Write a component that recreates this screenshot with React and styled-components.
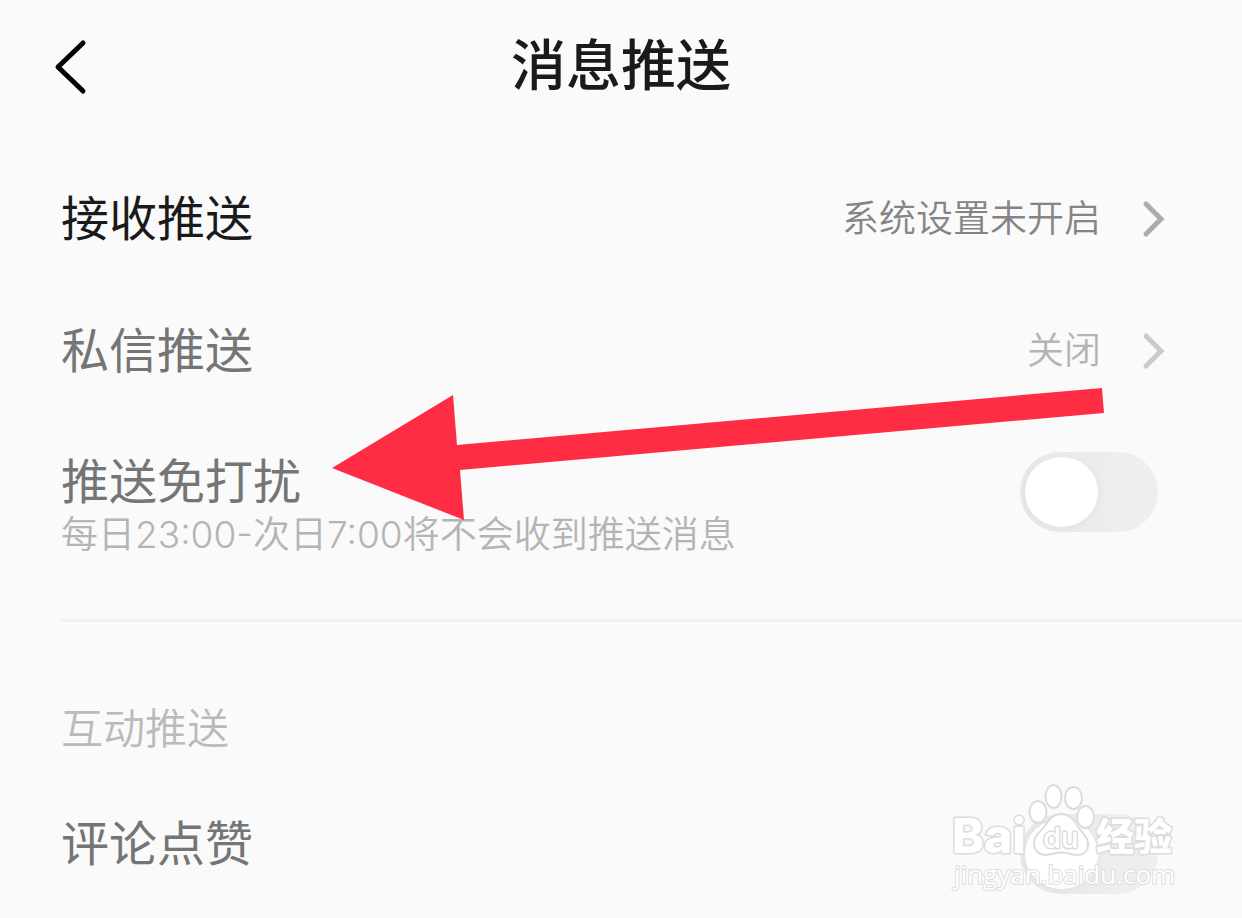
import React, { useState } from "react";
import styled, { createGlobalStyle } from "styled-components";

const GlobalStyle = createGlobalStyle`
  * {
    box-sizing: border-box;
  }

  body {
    margin: 0;
    background: #fafafa;
    font-family: Inter, "Noto Sans CJK SC", sans-serif;
    color: #1a1a1a;
  }
`;

const Page = styled.main`
  position: relative;
  overflow: hidden;
`;

const Header = styled.header`
  display: grid;
  grid-template-columns: 120px 1fr 120px;
  align-items: center;
  height: 134px;
`;

const BackButton = styled.button`
  display: flex;
  padding: 0 0 0 52px;
  border: 0;
  background: none;
  cursor: pointer;
`;

const Title = styled.h1`
  margin: 0;
  padding-bottom: 4px;
  font-size: 55px;
  font-weight: 500;
  line-height: 60px;
  text-align: center;
`;

const List = styled.section`
  padding: ${({ $top }) => $top}px 77px 0 61px;
`;

const NavRow = styled.button`
  display: flex;
  align-items: center;
  width: 100%;
  height: 132px;
  padding: 0;
  border: 0;
  background: none;
  font-family: inherit;
  color: ${({ $dim }) => ($dim ? "#757575" : "#1a1a1a")};
  text-align: left;
  cursor: pointer;
`;

const SwitchRow = styled.div`
  display: flex;
  align-items: flex-start;
  justify-content: space-between;
  padding-right: 7px;
  color: #757575;
`;

const Label = styled.span`
  display: block;
  flex-grow: 1;
  font-size: 48px;
  font-weight: 400;
  line-height: 60px;
`;

const Value = styled.span`
  margin-right: 40px;
  font-size: 37px;
  font-weight: 350;
  line-height: 46px;
  color: ${({ $dim }) => ($dim ? "#b4b4b4" : "#858585")};
`;

const Hint = styled.small`
  display: block;
  font-size: 37px;
  font-weight: 350;
  line-height: 46px;
  color: #b4b4b4;
`;

const Switch = styled.input`
  appearance: none;
  flex-shrink: 0;
  display: flex;
  width: 138px;
  height: 80px;
  margin: 0;
  padding: 5px;
  border-radius: 40px;
  background: linear-gradient(90deg, #e6e6e8, #eeeef0 70%);
  cursor: pointer;

  &::before {
    content: "";
    width: 73px;
    height: 70px;
    border-radius: 50%;
    background: #fff;
    box-shadow: 2px 2px 8px rgba(0, 0, 0, 0.03);
  }

  &:checked {
    justify-content: flex-end;
    background: #ff2d43;
  }
`;

const Divider = styled.hr`
  height: 3px;
  margin: 61px 0 0 60px;
  border: 0;
  background: #f2f2f3;
`;

const SectionTitle = styled.h2`
  margin: 0 0 60px;
  font-size: 42px;
  font-weight: 350;
  line-height: 50px;
  color: #bababa;
`;

const Arrow = styled.svg`
  position: absolute;
  top: 388px;
  left: 332px;
  pointer-events: none;
`;

const Watermark = styled.svg`
  position: absolute;
  top: 780px;
  right: 62px;
  pointer-events: none;
`;

const Chevron = ({ color }) => (
  <svg width="24" height="40" viewBox="0 0 24 40" fill="none" aria-hidden="true">
    <path d="M5 5L20 20L5 35" stroke={color} strokeWidth="5" strokeLinecap="round" />
  </svg>
);

const NavItem = ({ label, value, dim }) => (
  <NavRow type="button" $dim={dim}>
    <Label>{label}</Label>
    <Value $dim={dim}>{value}</Value>
    <Chevron color={dim ? "#cacaca" : "#acacac"} />
  </NavRow>
);

const SwitchItem = ({ id, label, hint }) => {
  const [checked, setChecked] = useState(false);

  return (
    <SwitchRow>
      <label htmlFor={id}>
        <Label>{label}</Label>
        {hint && <Hint>{hint}</Hint>}
      </label>
      <Switch
        id={id}
        type="checkbox"
        checked={checked}
        onChange={(e) => setChecked(e.target.checked)}
      />
    </SwitchRow>
  );
};

const BaiduMark = () => (
  <Watermark width="230" height="120" viewBox="0 0 230 120" aria-hidden="true">
    <g fill="#fff" stroke="#dcdcdc" strokeWidth="2" strokeLinejoin="round">
      <ellipse cx="88" cy="32" rx="8.5" ry="11" />
      <ellipse cx="103.5" cy="16.5" rx="8" ry="11.5" />
      <ellipse cx="123.5" cy="18" rx="8.5" ry="11" />
      <ellipse cx="135.5" cy="37" rx="8.5" ry="11" />
      <path d="M111 34C101 34 98 42 94 47C89 53 83 57 84 65C86 75 94 76 101 74C108 72 115 72 121 74C129 76 137 75 138 66C139 58 133 54 129 48C124 41 121 34 111 34Z" />
    </g>
    <g
      fill="#fff"
      stroke="#dcdcdc"
      strokeWidth="3"
      strokeLinejoin="round"
      paintOrder="stroke"
      fontFamily="Inter, 'Noto Sans CJK SC', sans-serif"
    >
      <text x="2" y="73" fontSize="48" fontWeight="800">Bai</text>
      <text x="93" y="68" fontSize="29" fontWeight="500">du</text>
      <text x="146" y="70" fontSize="38" fontWeight="900">经验</text>
      <text x="4" y="104" fontSize="26" strokeWidth="2" fontFamily="'Open Sans', sans-serif">
        jingyan.baidu.com
      </text>
    </g>
  </Watermark>
);

const App = () => {
  return (
    <>
      <GlobalStyle />
      <Page>
        <Header>
          <BackButton type="button" aria-label="返回">
            <svg width="36" height="56" viewBox="0 0 36 56" fill="none">
              <path
                d="M31 4L6 28L31 52"
                stroke="#000"
                strokeWidth="5"
                strokeLinecap="round"
                strokeLinejoin="round"
              />
            </svg>
          </BackButton>
          <Title>消息推送</Title>
        </Header>

        <List $top={19}>
          <NavItem label="接收推送" value="系统设置未开启" />
          <NavItem label="私信推送" value="关闭" dim />
        </List>
        <List $top={35}>
          <SwitchItem
            id="dnd"
            label="推送免打扰"
            hint="每日23:00-次日7:00将不会收到推送消息"
          />
        </List>

        <Divider />

        <List $top={82}>
          <SectionTitle>互动推送</SectionTitle>
          <SwitchItem id="likes" label="评论点赞" />
        </List>

        <Arrow width="773" height="133" viewBox="0 0 773 133" aria-hidden="true">
          <path d="M0 80L121 7L125 57L770 0L772 25L128 82L132 132Z" fill="#ff2d43" />
        </Arrow>
        <BaiduMark />
      </Page>
    </>
  );
};

export default App;
